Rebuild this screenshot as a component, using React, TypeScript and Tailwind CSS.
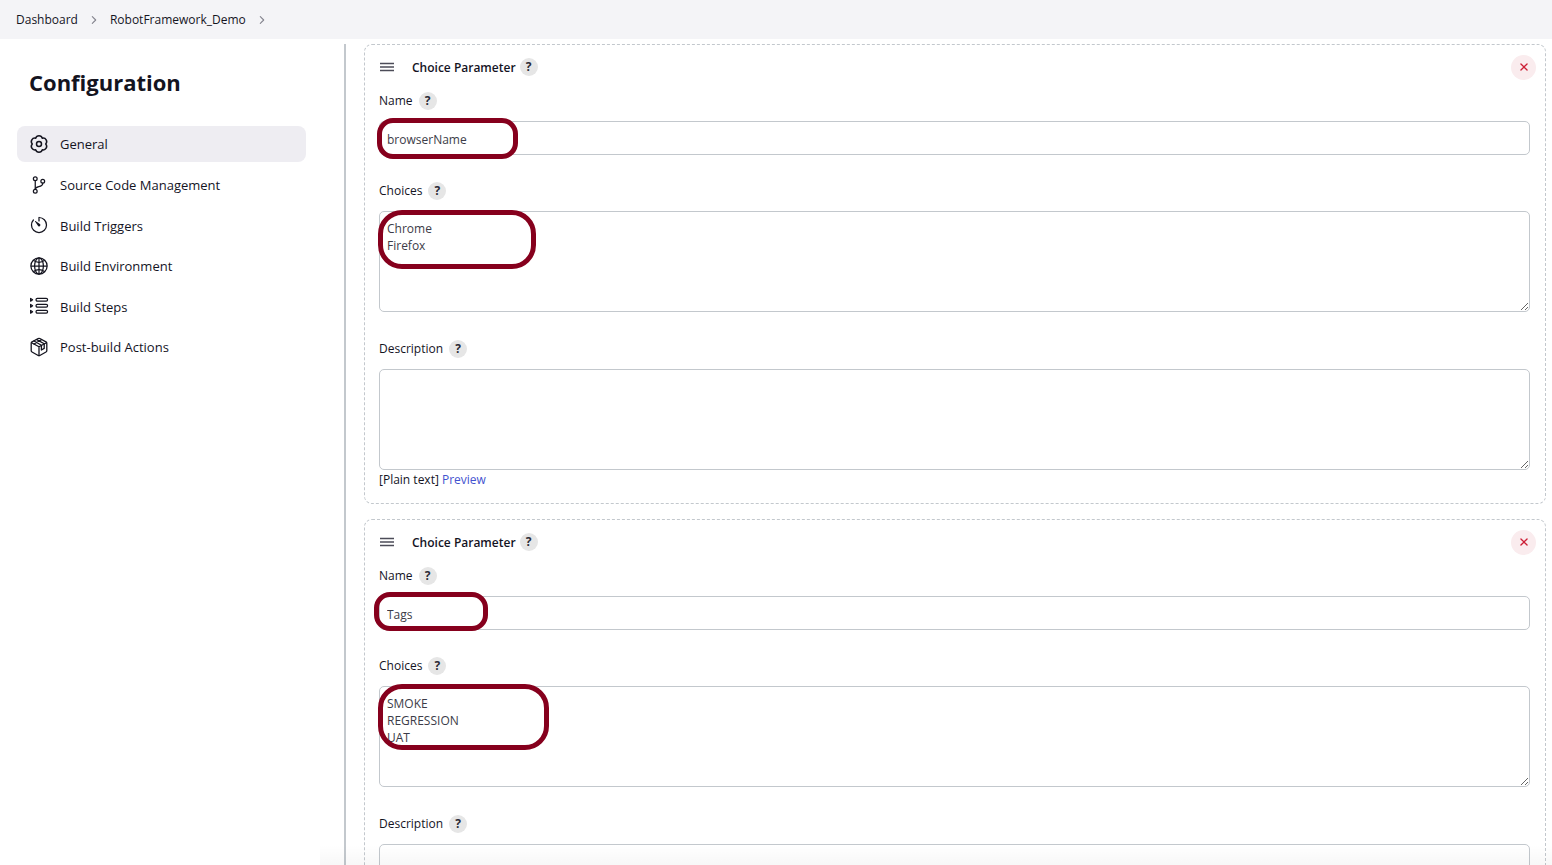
import { useId, type ReactNode } from "react";
import { IoGitBranchOutline, IoTimerOutline, IoGlobeOutline, IoChevronForward, IoClose } from "react-icons/io5";

function GearIcon() {
  return (
    <svg viewBox="0 0 20 20" className="size-5" fill="none" stroke="currentColor" strokeWidth="1.5" strokeLinejoin="round">
      <path d="M16.7 10A3.5 3.5 0 0 0 13.35 4.2 3.5 3.5 0 0 0 6.65 4.2 3.5 3.5 0 0 0 3.3 10 3.5 3.5 0 0 0 6.65 15.8 3.5 3.5 0 0 0 13.35 15.8 3.5 3.5 0 0 0 16.7 10Z" />
      <circle cx="10" cy="10" r="2.5" />
    </svg>
  );
}

function StepsIcon() {
  return (
    <svg viewBox="0 0 20 20" className="size-5" fill="none" stroke="currentColor" strokeWidth="1.2" strokeLinejoin="round">
      <path d="M1.6 2.4 3.6 3.8 1.6 5.2ZM1.6 8.4 3.6 9.8 1.6 11.2ZM1.6 14.4 3.6 15.8 1.6 17.2Z" />
      <rect x="7" y="2.4" width="11.6" height="2.8" rx="1.4" />
      <rect x="7" y="8.4" width="11.6" height="2.8" rx="1.4" />
      <rect x="7" y="14.4" width="11.6" height="2.8" rx="1.4" />
    </svg>
  );
}

function PackageIcon() {
  return (
    <svg viewBox="0 0 20 20" className="size-5" fill="none" stroke="currentColor" strokeWidth="1.3" strokeLinejoin="round" strokeLinecap="round">
      <path d="M9.2 1.5Q10 1.1 10.8 1.5L17 4.9Q17.8 5.4 17.8 6.3V13.7Q17.8 14.6 17 15L10.8 18.5Q10 18.9 9.2 18.5L3 15Q2.2 14.6 2.2 13.7V6.3Q2.2 5.4 3 4.9Z" />
      <path d="M2.6 5.7 10 9.8 17.4 5.7M10 9.8V18.5" />
      <path d="M5 4 12.4 8.2V13L15.2 11.4V6.8L7.8 2.6M5 7 12.4 2.8" />
    </svg>
  );
}

const navItems: { label: string; icon: ReactNode }[] = [
  { label: "General", icon: <GearIcon /> },
  { label: "Source Code Management", icon: <IoGitBranchOutline className="size-5" /> },
  { label: "Build Triggers", icon: <IoTimerOutline className="size-5" /> },
  { label: "Build Environment", icon: <IoGlobeOutline className="size-5" /> },
  { label: "Build Steps", icon: <StepsIcon /> },
  { label: "Post-build Actions", icon: <PackageIcon /> },
];

function Help({ topic }: { topic: string }) {
  return (
    <button
      type="button"
      aria-label={`Help for ${topic}`}
      className="flex size-[18px] items-center justify-center rounded-full bg-[#e6e6e6] text-xs leading-none font-bold text-[#2b2b36]"
    >
      ?
    </button>
  );
}

function FieldLabel({ htmlFor, children }: { htmlFor: string; children: string }) {
  return (
    <div className="flex h-[18px] items-center gap-1.5">
      <label htmlFor={htmlFor}>{children}</label>
      <Help topic={children} />
    </div>
  );
}

function Marker({ className }: { className: string }) {
  return <span aria-hidden="true" className={`pointer-events-none absolute border-5 border-[#86001d] ${className}`} />;
}

const areaClass =
  "block h-[101px] w-full resize-y rounded-[5px] border border-[#c3c8cd] bg-white px-[7px] py-2 leading-[17px] text-[#3c3c48] outline-none";

type ParameterProps = {
  name: string;
  choices: string;
  nameMarker: string;
  choicesMarker: string;
};

function ChoiceParameter({ name, choices, nameMarker, choicesMarker }: ParameterProps) {
  const id = useId();
  return (
    <section className="rounded-lg border border-dashed border-[#c3c8cd] pt-[9px] pr-[15px] pb-[13px] pl-3.5">
      <div className="flex h-[26px] items-center">
        <svg viewBox="0 0 14 10" className="mr-[18px] ml-px h-2.5 w-3.5" stroke="#4c4c58" strokeWidth="1.5">
          <path d="M0 1.5H14M0 5H14M0 8.5H14" />
        </svg>
        <h2 className="mr-1 pt-px font-semibold">Choice Parameter</h2>
        <Help topic="Choice Parameter" />
        <button
          type="button"
          aria-label="Remove parameter"
          className="-mr-1.5 ml-auto flex size-[25px] items-center justify-center rounded-full bg-[#faecee] text-[#cc1f36]"
        >
          <IoClose className="size-3.5" />
        </button>
      </div>

      <div className="mt-3">
        <FieldLabel htmlFor={`${id}-name`}>Name</FieldLabel>
        <div className="relative mt-[11px]">
          <input
            id={`${id}-name`}
            type="text"
            defaultValue={name}
            className="block h-[34px] w-full rounded-[5px] border border-[#c3c8cd] bg-white px-[7px] pt-0.5 text-[#3c3c48] outline-none"
          />
          <Marker className={nameMarker} />
        </div>
      </div>

      <div className="mt-[27px]">
        <FieldLabel htmlFor={`${id}-choices`}>Choices</FieldLabel>
        <div className="relative mt-[11px]">
          <textarea id={`${id}-choices`} defaultValue={choices} className={areaClass} />
          <Marker className={choicesMarker} />
        </div>
      </div>

      <div className="mt-7">
        <FieldLabel htmlFor={`${id}-description`}>Description</FieldLabel>
        <textarea id={`${id}-description`} className={`mt-[11px] ${areaClass}`} />
        <div className="leading-5">
          [Plain text]{" "}
          <a href="#preview" className="text-[#4353cf]">
            Preview
          </a>
        </div>
      </div>
    </section>
  );
}

export default function App() {
  return (
    <div className="relative flex h-screen flex-col overflow-hidden bg-white font-['Open_Sans','Noto_Sans',sans-serif] text-xs text-[#14141f]">
      <header className="h-[39px] shrink-0 bg-[#f4f4f7]">
        <nav aria-label="Breadcrumb" className="flex h-full items-center gap-2.5 px-4 text-xs">
          <a href="#dashboard">Dashboard</a>
          <IoChevronForward className="size-3 text-[#85858f]" />
          <a href="#project">RobotFramework_Demo</a>
          <IoChevronForward className="size-3 text-[#85858f]" />
        </nav>
      </header>

      <div className="flex min-h-0 flex-1">
        <aside className="w-[344px] shrink-0 pr-[38px] pl-[17px]">
          <h1 className="mt-[27px] pl-3 text-[22px] leading-8 font-bold">Configuration</h1>
          <ul className="mt-7 flex h-[239px] flex-col justify-between text-[13px]">
            {navItems.map((item, index) => (
              <li key={item.label}>
                <a
                  href="#section"
                  aria-current={index === 0 ? "true" : undefined}
                  className="flex h-9 items-center gap-[11px] rounded-lg px-3 aria-[current]:bg-[#eeedf2]"
                >
                  {item.icon}
                  <span className="pt-0.5">{item.label}</span>
                </a>
              </li>
            ))}
          </ul>
        </aside>

        <main className="mt-[5px] flex min-w-0 flex-1 flex-col gap-[15px] overflow-y-auto border-l-2 border-[#c3c8cd] pr-1.5 pl-[18px] [scrollbar-width:none]">
          <ChoiceParameter
            name="browserName"
            choices={"Chrome\nFirefox"}
            nameMarker="-top-[3px] -left-0.5 h-[41px] w-[141px] rounded-2xl"
            choicesMarker="-top-px -left-px h-[59px] w-[158px] rounded-3xl"
          />
          <ChoiceParameter
            name="Tags"
            choices={"SMOKE\nREGRESSION\nUAT"}
            nameMarker="-top-1 -left-[5px] h-[39px] w-[114px] rounded-2xl"
            choicesMarker="-top-0.5 -left-px h-[66px] w-[171px] rounded-3xl"
          />
        </main>
      </div>

      <div
        aria-hidden="true"
        className="pointer-events-none absolute right-0 bottom-0 left-80 h-5 bg-linear-to-b from-transparent to-black/3"
      />
    </div>
  );
}
